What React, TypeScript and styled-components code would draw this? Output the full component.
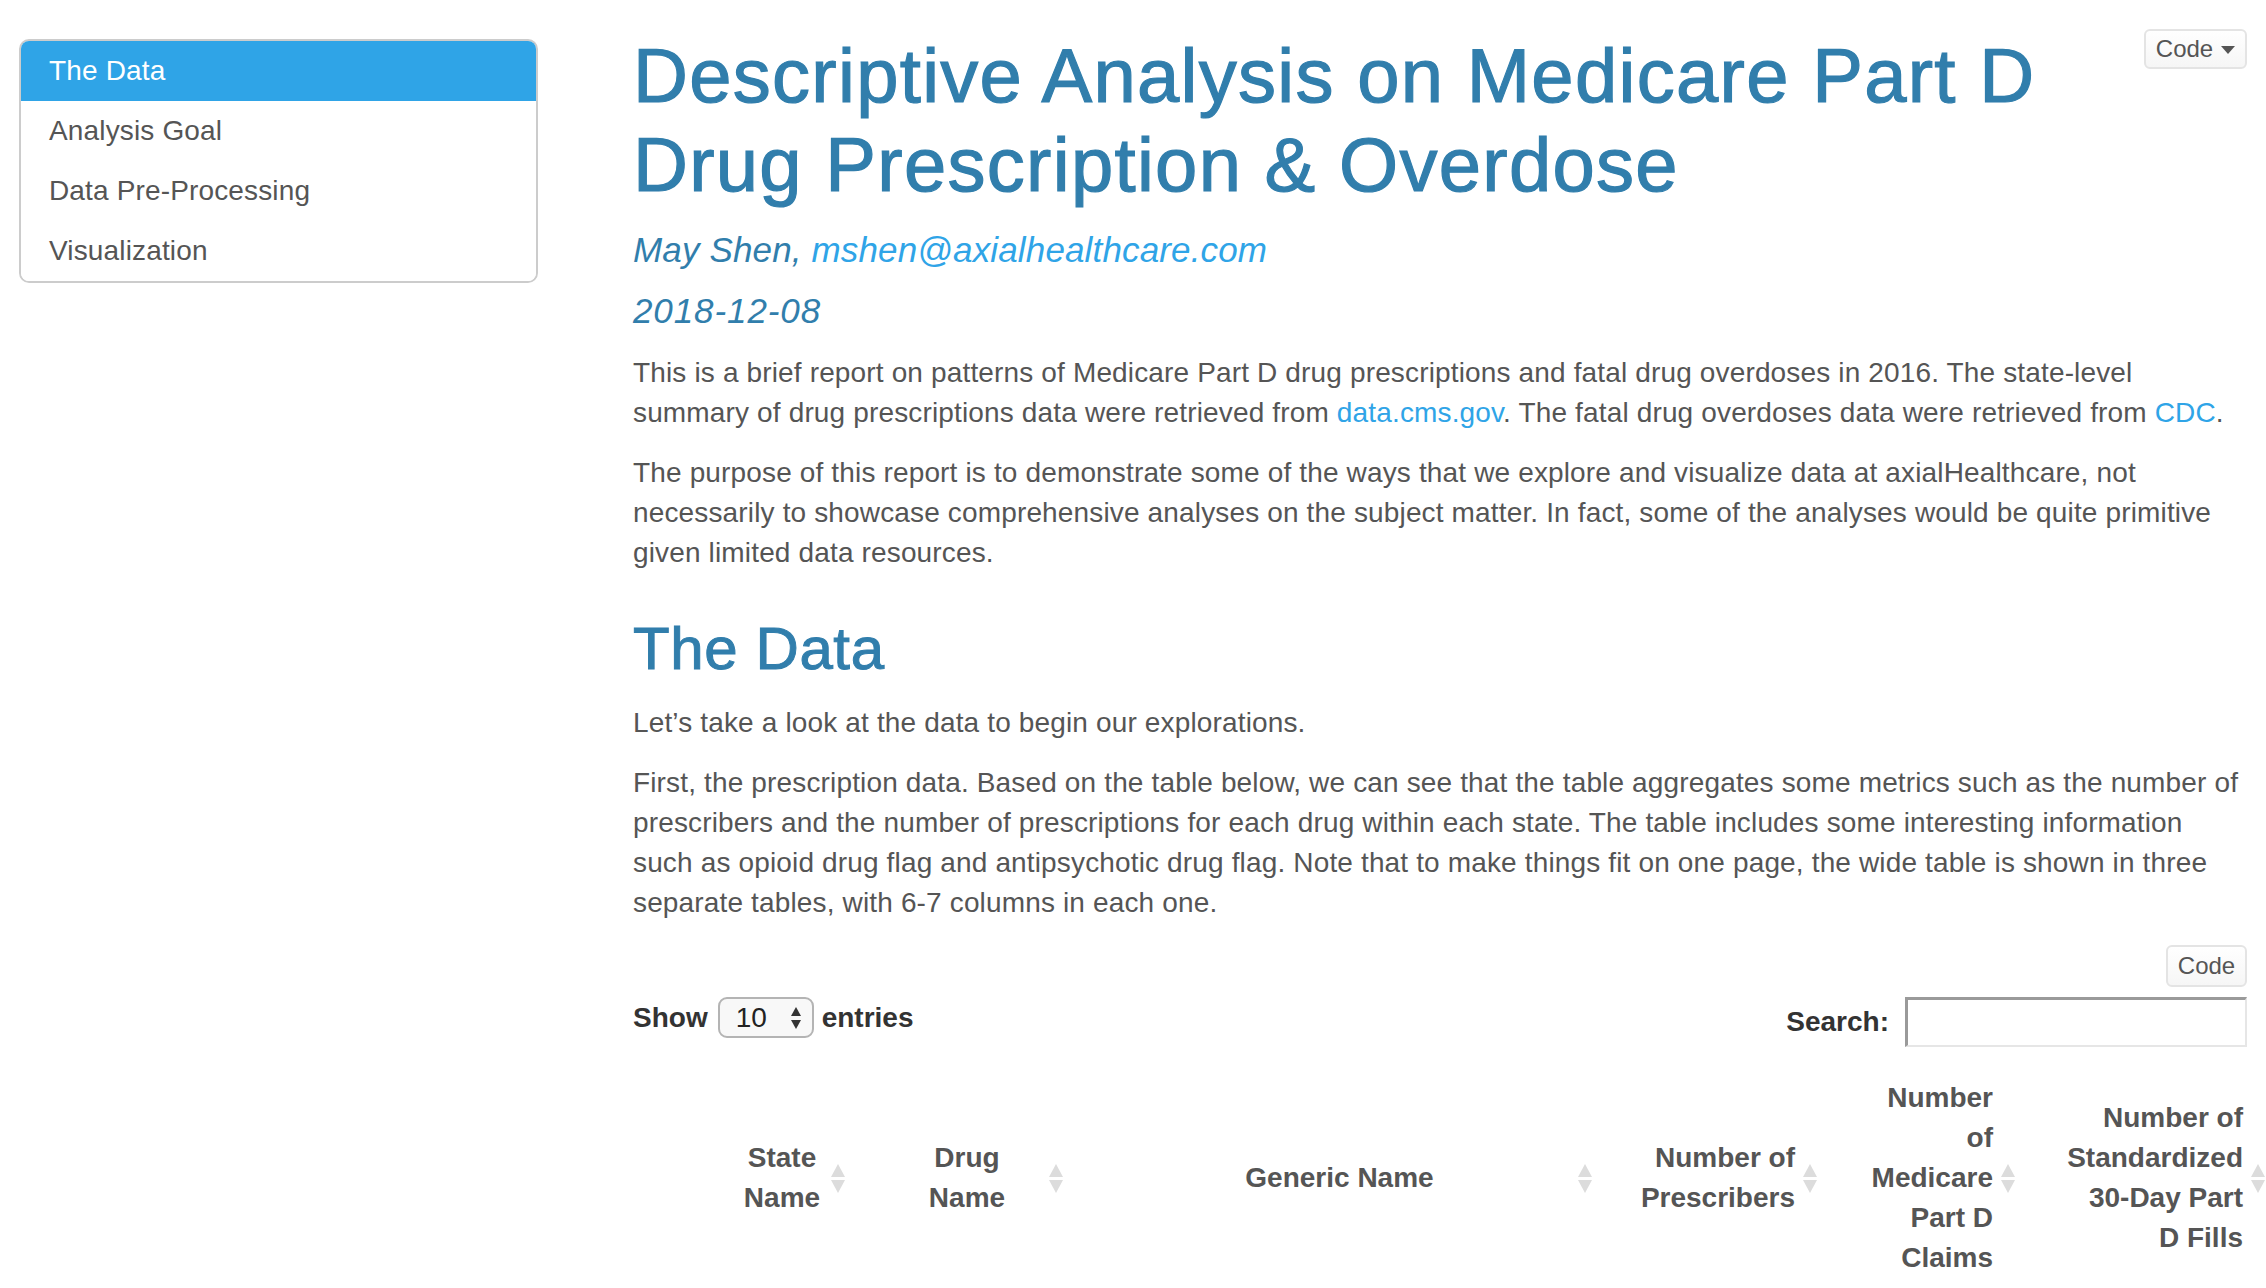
import React from 'react';
import styled, { createGlobalStyle } from 'styled-components';

const GlobalStyle = createGlobalStyle`
  html, body {
    margin: 0;
    padding: 0;
    background: #ffffff;
    overflow-x: hidden;
  }
  body {
    font-family: "Liberation Sans", Arial, Helvetica, sans-serif;
    font-size: 28px;
    line-height: 40px;
    color: #555555;
  }
`;

const Page = styled.div`
  display: grid;
  grid-template-columns: 519px 1614px;
  column-gap: 95px;
  padding: 0 19px;
  align-items: start;
`;

const Toc = styled.nav`
  margin-top: 39px;
  border: 2px solid #cccccc;
  border-radius: 10px;
  overflow: hidden;
`;

const TocItem = styled.div<{ $active?: boolean }>`
  padding: 10px 28px;
  font-size: 28px;
  line-height: 40px;
  letter-spacing: 0.15px;
  color: ${(p) => (p.$active ? '#ffffff' : '#555555')};
  background: ${(p) => (p.$active ? '#2fa4e7' : '#ffffff')};
`;

const Main = styled.main`
  min-width: 0;
`;

const Header = styled.div`
  display: flex;
  align-items: flex-start;
  justify-content: space-between;
  gap: 20px;
  padding-top: 29px;
`;

const Title = styled.h1`
  margin: 2px 0 0;
  font-size: 76px;
  line-height: 89px;
  font-weight: 400;
  letter-spacing: 1.3px;
  color: #317eac;
  -webkit-text-stroke: 1.2px #317eac;
`;

const CodeButton = styled.button<{ $width: number; $height: number }>`
  flex: none;
  display: inline-flex;
  align-items: center;
  justify-content: center;
  gap: 8px;
  width: ${(p) => p.$width}px;
  height: ${(p) => p.$height}px;
  padding: 0 10px;
  font-family: inherit;
  font-size: 24px;
  color: #555555;
  background: linear-gradient(#ffffff, #f6f6f6);
  border: 2px solid #e4e4e4;
  border-radius: 6px;
`;

const Caret = styled.span`
  width: 0;
  height: 0;
  border-left: 7px solid transparent;
  border-right: 7px solid transparent;
  border-top: 8px solid #555555;
  margin-top: 2px;
`;

const Meta = styled.h4<{ $gap: number; $spacing: number }>`
  margin: ${(p) => p.$gap}px 0 0;
  font-size: 35px;
  line-height: 38px;
  font-weight: 400;
  font-style: italic;
  letter-spacing: ${(p) => p.$spacing}px;
  color: #317eac;
`;

const Link = styled.a`
  color: #2fa4e7;
  text-decoration: none;
`;

const Para = styled.p<{ $gap: number }>`
  margin: ${(p) => p.$gap}px 0 0;
  font-size: 28px;
  line-height: 40px;
  letter-spacing: 0.15px;
`;

const Section = styled.h2`
  margin: 43px 0 0;
  font-size: 60px;
  line-height: 66px;
  font-weight: 400;
  letter-spacing: 0.6px;
  color: #317eac;
  -webkit-text-stroke: 1px #317eac;
`;

const ButtonRow = styled.div`
  display: flex;
  justify-content: flex-end;
  margin-top: 22px;
`;

const Controls = styled.div`
  display: flex;
  justify-content: space-between;
  align-items: flex-start;
  margin-top: 10px;
  color: #333333;
  font-weight: 700;
`;

const ControlGroup = styled.label`
  display: flex;
  align-items: center;
`;

const Select = styled.div`
  display: flex;
  align-items: center;
  justify-content: space-between;
  box-sizing: border-box;
  width: 96px;
  height: 41px;
  margin: 0 8px 0 10px;
  padding: 0 10px 0 16px;
  border: 2px solid #b4b4b4;
  border-radius: 9px;
  background: #f8f8f8;
  font-weight: 400;
  color: #222222;
`;

const SearchInput = styled.div`
  box-sizing: border-box;
  width: 342px;
  height: 50px;
  margin-left: 16px;
  border-style: solid;
  border-width: 3px 2px 2px 3px;
  border-color: #9a9a9a #e6e6e6 #e6e6e6 #9a9a9a;
  background: #ffffff;
`;

const Table = styled.table`
  margin-top: 15px;
  border-collapse: collapse;
  table-layout: fixed;
  width: 1648px;
`;

const Th = styled.th<{ $align: 'left' | 'center' | 'right'; $padLeft: number }>`
  padding: 16px 16px 16px ${(p) => p.$padLeft}px;
  font-size: 28px;
  line-height: 40px;
  font-weight: 700;
  color: #555555;
  vertical-align: middle;
  text-align: ${(p) => p.$align};
`;

const HeadCell = styled.div`
  display: grid;
  grid-template-columns: 1fr 14px;
  column-gap: 8px;
  align-items: center;
`;

const SortIcon = () => (
  <svg width="14" height="30" viewBox="0 0 14 30">
    <polygon points="7,1 14,14 0,14" fill="#dcdcdc" />
    <polygon points="0,17 14,17 7,30" fill="#dcdcdc" />
  </svg>
);

const SelectArrows = () => (
  <svg width="12" height="24" viewBox="0 0 12 24">
    <polygon points="6,1 11,10 1,10" fill="#333333" />
    <polygon points="1,14 11,14 6,23" fill="#333333" />
  </svg>
);

interface Column {
  lines: string[];
  width: number;
  padLeft: number;
  align: 'left' | 'center' | 'right';
  sortable: boolean;
}

const columns: Column[] = [
  { lines: [], width: 88, padLeft: 20, align: 'left', sortable: false },
  { lines: ['State', 'Name'], width: 140, padLeft: 20, align: 'center', sortable: true },
  { lines: ['Drug', 'Name'], width: 218, padLeft: 32, align: 'center', sortable: true },
  { lines: ['Generic Name'], width: 529, padLeft: 30, align: 'center', sortable: true },
  { lines: ['Number of', 'Prescribers'], width: 225, padLeft: 20, align: 'right', sortable: true },
  { lines: ['Number', 'of', 'Medicare', 'Part D', 'Claims'], width: 198, padLeft: 20, align: 'right', sortable: true },
  { lines: ['Number of', 'Standardized', '30-Day Part', 'D Fills'], width: 250, padLeft: 20, align: 'right', sortable: true },
];

const tocItems = ['The Data', 'Analysis Goal', 'Data Pre-Processing', 'Visualization'];

export default function App() {
  return (
    <>
      <GlobalStyle />
      <Page>
        <Toc>
          {tocItems.map((item, i) => (
            <TocItem key={item} $active={i === 0}>
              {item}
            </TocItem>
          ))}
        </Toc>
        <Main>
          <Header>
            <Title>
              Descriptive Analysis on Medicare Part D<br />
              Drug Prescription &amp; Overdose
            </Title>
            <CodeButton $width={103} $height={40}>
              Code <Caret />
            </CodeButton>
          </Header>
          <Meta $gap={22} $spacing={0.15}>
            May Shen, <Link href="#">mshen@axialhealthcare.com</Link>
          </Meta>
          <Meta $gap={23} $spacing={0.9}>2018-12-08</Meta>
          <Para $gap={23}>
            This is a brief report on patterns of Medicare Part D drug prescriptions and fatal drug
            overdoses in 2016. The state-level
            <br />
            summary of drug prescriptions data were retrieved from <Link href="#">data.cms.gov</Link>.
            The fatal drug overdoses data were retrieved from <Link href="#">CDC</Link>.
          </Para>
          <Para $gap={20}>
            The purpose of this report is to demonstrate some of the ways that we explore and visualize
            data at axialHealthcare, not
            <br />
            necessarily to showcase comprehensive analyses on the subject matter. In fact, some of the
            analyses would be quite primitive
            <br />
            given limited data resources.
          </Para>
          <Section>The Data</Section>
          <Para $gap={21}>Let’s take a look at the data to begin our explorations.</Para>
          <Para $gap={20}>
            First, the prescription data. Based on the table below, we can see that the table
            aggregates some metrics such as the number of
            <br />
            prescribers and the number of prescriptions for each drug within each state. The table
            includes some interesting information
            <br />
            such as opioid drug flag and antipsychotic drug flag. Note that to make things fit on one
            page, the wide table is shown in three
            <br />
            separate tables, with 6-7 columns in each one.
          </Para>
          <ButtonRow>
            <CodeButton $width={81} $height={42}>Code</CodeButton>
          </ButtonRow>
          <Controls>
            <ControlGroup>
              Show
              <Select>
                10
                <SelectArrows />
              </Select>
              entries
            </ControlGroup>
            <ControlGroup>
              Search:
              <SearchInput />
            </ControlGroup>
          </Controls>
          <Table>
            <colgroup>
              {columns.map((c, i) => (
                <col key={i} style={{ width: c.width }} />
              ))}
            </colgroup>
            <thead>
              <tr>
                {columns.map((c, i) => (
                  <Th key={i} $align={c.align} $padLeft={c.padLeft}>
                    {c.sortable ? (
                      <HeadCell>
                        <span>
                          {c.lines.map((l, j) => (
                            <React.Fragment key={j}>
                              {j > 0 && <br />}
                              {l}
                            </React.Fragment>
                          ))}
                        </span>
                        <SortIcon />
                      </HeadCell>
                    ) : null}
                  </Th>
                ))}
              </tr>
            </thead>
          </Table>
        </Main>
      </Page>
    </>
  );
}
